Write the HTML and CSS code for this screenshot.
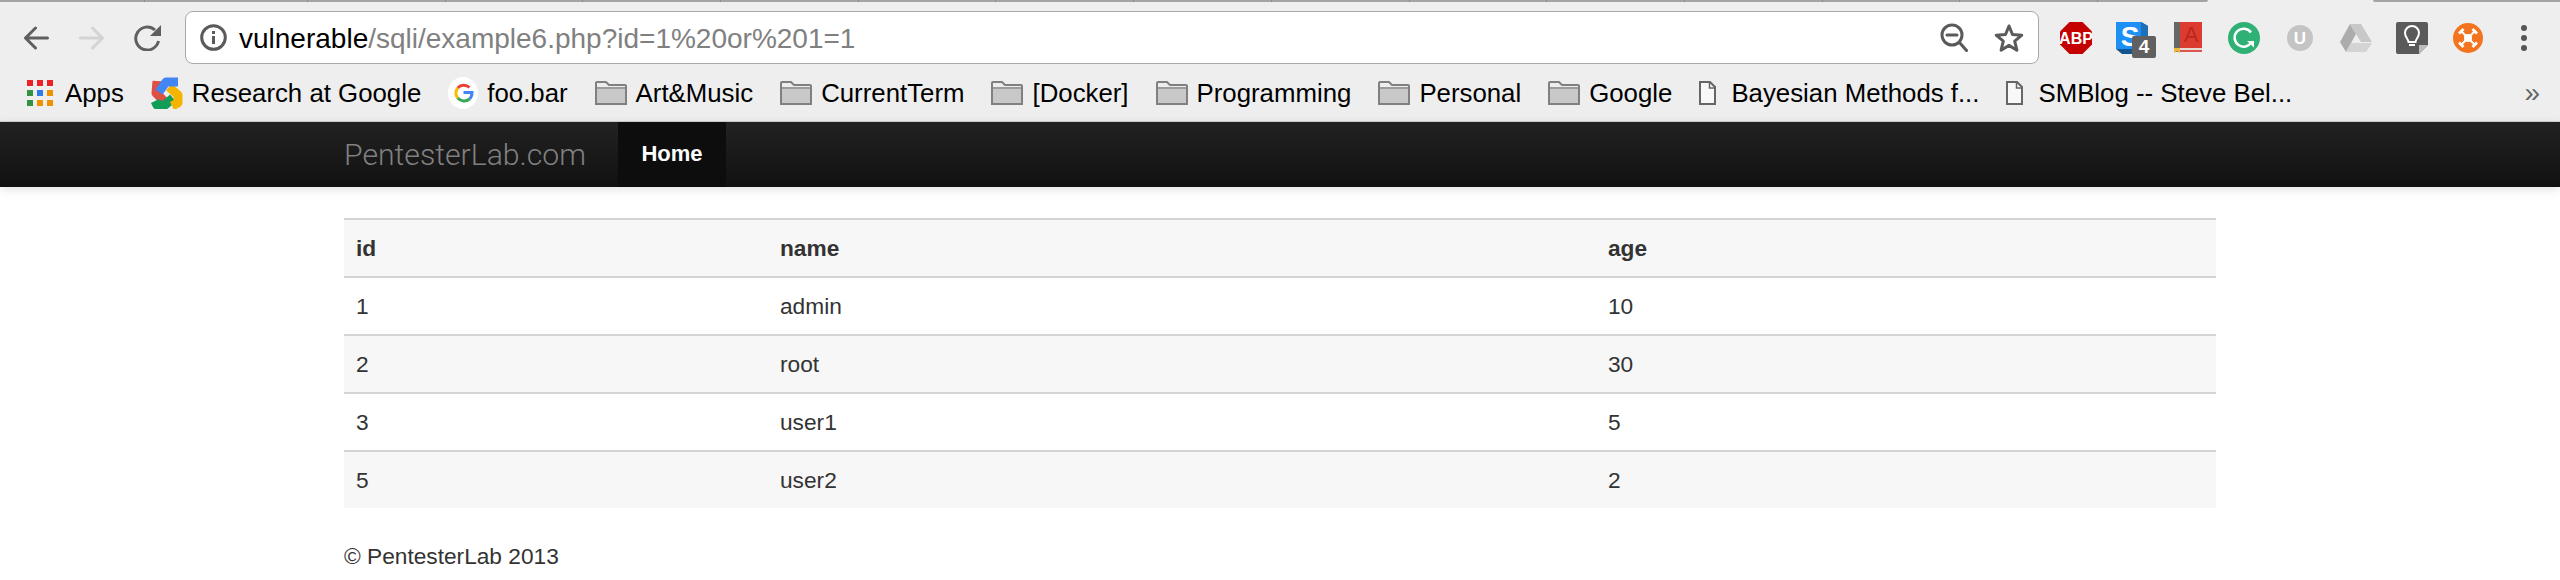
FILE: index.html
```html
<!DOCTYPE html>
<html lang="en">
<head>
    <meta charset="UTF-8">
    <title>PentesterLab.com</title>
    <link rel="stylesheet" href="styles.css">
</head>
<body>
    <div class="chrome">
        <div class="tabs">
            <span class="tab tab-first"></span><span class="tab tab-second"></span>
            <span class="tab"></span><span class="tab"></span><span class="tab"></span><span class="tab"></span><span class="tab"></span><span class="tab"></span><span class="tab"></span><span class="tab"></span><span class="tab"></span><span class="tab"></span><span class="tab"></span><span class="tab"></span><span class="tab"></span>
            <span class="tab tab-short"></span>
            <span class="tab-active"></span>
            <span class="tab tab-last"></span>
        </div>

        <div class="toolbar">
            <div class="tool-btn">
                <svg width="26" height="24" viewBox="0 0 26 24" fill="none" stroke="#5f5f5f" stroke-width="3" stroke-linecap="round" stroke-linejoin="round"><path d="M24.500 12H2.500M12.500 2 2.500 12l10 10"/></svg>
            </div>
            <div class="tool-btn">
                <svg width="26" height="24" viewBox="0 0 26 24" fill="none" stroke="#d3d3d3" stroke-width="3" stroke-linecap="round" stroke-linejoin="round"><path d="M1.500 12h22M13.500 2l10 10-10 10"/></svg>
            </div>
            <div class="tool-btn">
                <svg width="28" height="26" viewBox="0 0 28 26" fill="none"><path d="M24.500 16A11.500 11.500 0 1 1 21 5" stroke="#5f5f5f" stroke-width="3"/><path d="M27 0v11H16z" fill="#5f5f5f"/></svg>
            </div>

            <div class="address">
                <svg class="info-icon" width="27" height="27" viewBox="0 0 27 27" fill="none" stroke="#5a5a5a"><circle cx="13.500" cy="13.500" r="11.800" stroke-width="3"/><path d="M13.500 12v8" stroke-width="3"/><path d="M13.500 7v3" stroke-width="3"/></svg>
                <div class="url"><span class="url-host">vulnerable</span>/sqli/example6.php?id=1%20or%201=1</div>
                <svg class="zoom-icon" width="28" height="29" viewBox="0 0 28 29" fill="none" stroke="#5a5a5a" stroke-width="3"><circle cx="12" cy="12" r="10"/><path d="M7 12h10M19.500 19.500l7 8" stroke-linecap="round"/></svg>
                <svg class="star-icon" width="30" height="30" viewBox="0 0 30 30" fill="none" stroke="#5a5a5a" stroke-width="3" stroke-linejoin="round"><path d="M15 3l3.500 8.500 9.300.7-7.100 6 2.200 9L15 22.400 7.100 27.200l2.200-9-7.100-6 9.300-.7z"/></svg>
            </div>

            <div class="tool-btn">
                <svg width="32" height="32" viewBox="0 0 32 32"><path d="M9.500 0h13L32 9.500v13L22.500 32h-13L0 22.500v-13z" fill="#c40000"/><text x="16" y="21.500" class="abp-text">ABP</text></svg>
            </div>
            <div class="tool-btn">
                <svg width="32" height="32" viewBox="0 0 32 32"><path d="M0 0h25l7 4v23l-6 5H6l-6-5z" fill="#15558f"/><path d="M25 0l7 4v23l-7 0z" fill="#1d6fb8"/><path d="M0 0h25v27H0z" fill="#1e90f5"/><text x="14" y="24" class="s-text">S</text></svg>
                <span class="ext-badge">4</span>
            </div>
            <div class="tool-btn">
                <svg width="28" height="32" viewBox="0 0 28 32"><path d="M0 0h6v30H0z" fill="#666"/><path d="M6 0h22v26H6z" fill="#dd3b2f"/><path d="M6 26h22v2H6z" fill="#e9d9d4"/><path d="M6 28h22v2H6z" fill="#d9574c"/><path d="M0 26h6v5l-3-2-3 2z" fill="#eeb93a"/><text x="17" y="20" class="book-text">A</text></svg>
            </div>
            <div class="tool-btn">
                <svg width="32" height="32" viewBox="0 0 32 32"><circle cx="16" cy="16" r="16" fill="#2fb074"/><path d="M23.500 20A9 9 0 1 1 23 10.500" fill="none" stroke="#fff" stroke-width="2.500"/><path d="M19 19h7v6.500z" fill="#fff"/></svg>
            </div>
            <div class="tool-btn">
                <svg width="26" height="26" viewBox="0 0 26 26"><circle cx="13" cy="13" r="13" fill="#c4c4c4"/><text x="13" y="19" class="u-text">U</text></svg>
            </div>
            <div class="tool-btn">
                <svg width="32" height="28" viewBox="0 0 32 28"><path d="M10 0l6 10L6 28 0 18z" fill="#acacac"/><path d="M10 0h11l11 18H21l-5-8z" fill="#c8c8c8"/><path d="M11 19h21l-6 9H6z" fill="#d4d4d4"/></svg>
            </div>
            <div class="tool-btn">
                <svg width="32" height="32" viewBox="0 0 32 32"><path d="M2 0h28q2 0 2 2v21l-9 9H2q-2 0-2-2V2q0-2 2-2z" fill="#5a5a5a"/><path d="M32 23h-9v9z" fill="#bcbcbc"/><path d="M12.500 20c0-3-3.500-4.500-3.500-9a7 7 0 0 1 14 0c0 4.500-3.500 6-3.500 9z" fill="none" stroke="#fff" stroke-width="2"/><path d="M13 23h6" stroke="#fff" stroke-width="2"/></svg>
            </div>
            <div class="tool-btn">
                <svg width="30" height="30" viewBox="0 0 30 30"><circle cx="15" cy="15" r="15" fill="#f4731f"/><path d="M8 8l14 14M22 8L8 22" stroke="#fff" stroke-width="2"/><circle cx="15" cy="15" r="4" fill="#fff"/><path d="M5 9.500l4.500-4.500 2 2L7 11.500zM18.500 7l2-2 4.500 4.500-2 2zM5 20.500l2-2 4.500 4.500-2 2zM18.500 23l4.500-4.500 2 2L20.500 25z" fill="#fff"/></svg>
            </div>
            <div class="tool-btn">
                <svg width="6" height="26" viewBox="0 0 6 26" fill="#555"><circle cx="3" cy="3" r="3"/><circle cx="3" cy="13" r="3"/><circle cx="3" cy="23" r="3"/></svg>
            </div>
        </div>

        <div class="bookmarks">
            <a class="bookmark bookmark-apps">
                <svg width="26" height="26" viewBox="0 0 26 26"><path d="M0 0h6v6H0zM10 0h6v6h-6zM20 0h6v6h-6z" fill="#ee2027"/><path d="M0 10h6v6H0zM0 20h6v6H0z" fill="#34913f"/><path d="M10 10h6v6h-6z" fill="#2f7bee"/><path d="M20 10h6v6h-6zM10 20h6v6h-6zM20 20h6v6h-6z" fill="#ee9200"/></svg>
                Apps
            </a>
            <a class="bookmark">
                <svg width="32" height="32" viewBox="0 0 32 32" fill="none" stroke-width="9" stroke-linejoin="round"><path d="M6 4 5 16l9 9" stroke="#dd5044"/><path d="M22 21l-8 7H6l-2-4" stroke="#0f9d58"/><path d="M18 10l9 8v8l-6 3" stroke="#f4b400"/><path d="M8 15l7-10h12" stroke="#4285f4"/></svg>
                Research at Google
            </a>
            <a class="bookmark">
                <svg width="30" height="32" viewBox="0 0 30 32"><path d="M0 16a15 16 0 0 1 30 0 15 16 0 0 1-30 0z" fill="#fff"/><path d="M21.500 10.500A8.500 8.500 0 0 0 9.700 11" fill="none" stroke="#ea4335" stroke-width="3"/><path d="M9.700 11a8.500 8.500 0 0 0 0 10" fill="none" stroke="#fbbc05" stroke-width="3"/><path d="M9.700 21a8.500 8.500 0 0 0 11.800 1" fill="none" stroke="#34a853" stroke-width="3"/><path d="M21.500 22q2.500-2.500 2.500-6.500h-8.500" fill="none" stroke="#4285f4" stroke-width="3"/></svg>
                foo.bar
            </a>
            <a class="bookmark"><svg width="32" height="24" viewBox="0 0 32 24"><use href="#folder"/></svg>Art&amp;Music</a>
            <a class="bookmark"><svg width="32" height="24" viewBox="0 0 32 24"><use href="#folder"/></svg>CurrentTerm</a>
            <a class="bookmark"><svg width="32" height="24" viewBox="0 0 32 24"><use href="#folder"/></svg>[Docker]</a>
            <a class="bookmark"><svg width="32" height="24" viewBox="0 0 32 24"><use href="#folder"/></svg>Programming</a>
            <a class="bookmark"><svg width="32" height="24" viewBox="0 0 32 24"><use href="#folder"/></svg>Personal</a>
            <a class="bookmark"><svg width="32" height="24" viewBox="0 0 32 24"><use href="#folder"/></svg>Google</a>
            <a class="bookmark bookmark-file"><svg width="17" height="24" viewBox="0 0 17 24"><use href="#file"/></svg>Bayesian Methods f...</a>
            <a class="bookmark bookmark-file"><svg width="17" height="24" viewBox="0 0 17 24"><use href="#file"/></svg>SMBlog -- Steve Bel...</a>
            <span class="more">»</span>
        </div>
    </div>

    <div class="navbar">
        <div class="container nav-inner">
            <a class="brand">PentesterLab.com</a>
            <a class="nav-active">Home</a>
        </div>
    </div>

    <div class="container">
        <table class="results">
            <thead>
                <tr><th class="col-id">id</th><th class="col-name">name</th><th>age</th></tr>
            </thead>
            <tbody>
                <tr><td>1</td><td>admin</td><td>10</td></tr>
                <tr><td>2</td><td>root</td><td>30</td></tr>
                <tr><td>3</td><td>user1</td><td>5</td></tr>
                <tr><td>5</td><td>user2</td><td>2</td></tr>
            </tbody>
        </table>
        <footer>© PentesterLab 2013</footer>
    </div>

    <svg class="defs" width="0" height="0">
        <symbol id="folder" viewBox="0 0 32 24">
            <path d="M1 23V2q0-1 1-1h9l3 3h16q1 0 1 1v18z" fill="#ededed" stroke="#808080" stroke-width="2"/>
            <path d="M2 8h28v14H2z" fill="#c8c8c8"/>
            <path d="M2 7h28" stroke="#808080" stroke-width="1.500"/>
        </symbol>
        <symbol id="file" viewBox="0 0 17 24">
            <path d="M1 1h10l5 5v17H1z" fill="#f8f8f8" stroke="#666" stroke-width="2"/>
            <path d="M10.500 1v6H16" fill="none" stroke="#666" stroke-width="1.500"/>
        </symbol>
    </svg>
</body>
</html>
```

FILE: styles.css
```css
* {
    box-sizing: border-box;
}

body {
    margin: 0;
    background: #fff;
    color: #333;
    font-family: "Liberation Sans", Arial, sans-serif;
    overflow: hidden;
}

.defs {
    position: absolute;
}

.container {
    width: 1872px;
    margin: 0 auto;
}

/* browser chrome */
.chrome {
    height: 122px;
    background: #eeeeee;
    border-bottom: 1px solid #d2d2d2;
}

.tabs {
    display: flex;
    height: 11px;
    align-items: flex-start;
}

.tab {
    width: 137.700px;
    height: 2px;
    background: #a4a4a4;
    border-right: 1px solid #8c8c8c;
}

.tab-first {
    width: 145px;
}

.tab-second {
    width: 163px;
}

.tab-short {
    width: 110px;
    border-right: 0;
    border-bottom-right-radius: 3px;
}

.tab-active {
    width: 165px;
}

.tab-last {
    flex: 1;
    border-right: 0;
    border-bottom-left-radius: 3px;
}

.toolbar {
    display: flex;
    align-items: center;
    height: 53px;
    padding: 0 8px;
}

.tool-btn {
    position: relative;
    display: flex;
    justify-content: center;
    align-items: center;
    flex: 0 0 56px;
}

.address {
    flex: 1;
    display: flex;
    align-items: center;
    height: 53px;
    margin: 0 9px;
    padding: 0 14px;
    background: #fff;
    border: 1.500px solid #a9a9a9;
    border-radius: 8px;
}

.url {
    flex: 1;
    margin-left: 12px;
    padding-top: 2px;
    color: #808080;
    font-size: 28px;
}

.url-host {
    color: #000;
}

.star-icon {
    margin-left: 26px;
}

.abp-text {
    fill: #fff;
    font-size: 16px;
    font-weight: bold;
    text-anchor: middle;
}

.s-text {
    fill: #fff;
    font-size: 28px;
    font-weight: bold;
    text-anchor: middle;
}

.book-text {
    fill: #b9281f;
    font-size: 22px;
    text-anchor: middle;
}

.u-text {
    fill: #fff;
    font-size: 17px;
    font-weight: bold;
    text-anchor: middle;
}

.ext-badge {
    position: absolute;
    left: 28px;
    top: 14px;
    width: 24px;
    height: 22px;
    background: #606060;
    border-radius: 2px;
    color: #fff;
    font-size: 19px;
    font-weight: bold;
    line-height: 22px;
    text-align: center;
}

.bookmarks {
    display: flex;
    align-items: center;
    gap: 27px;
    height: 57px;
    padding: 1px 20px 0 27px;
    color: #000;
    font-size: 25.800px;
    white-space: nowrap;
}

.bookmark {
    display: flex;
    align-items: center;
    gap: 9px;
}

.bookmark-apps {
    gap: 12px;
}

.bookmark-file {
    gap: 15px;
}

.more {
    margin-left: auto;
    color: #666;
    font-size: 28px;
}

/* site */
.navbar {
    height: 65px;
    background: linear-gradient(#222222, #111111);
    box-shadow: 0 2px 10px rgba(0, 0, 0, 0.12);
}

.nav-inner {
    display: flex;
    height: 100%;
}

.brand {
    width: 274px;
    color: #808080;
    font-family: Roboto, "Liberation Sans", sans-serif;
    font-size: 30.200px;
    font-weight: 300;
    line-height: 66px;
}

.nav-active {
    width: 108px;
    height: 100%;
    background: #0d0d0d;
    color: #fff;
    font-size: 22px;
    font-weight: bold;
    line-height: 64px;
    text-align: center;
}

.results {
    width: 100%;
    margin-top: 31px;
    border-collapse: separate;
    border-spacing: 0;
    font-size: 22.700px;
    table-layout: fixed;
}

.col-id {
    width: 424px;
}

.col-name {
    width: 828px;
}

.results th,
.results td {
    height: 58px;
    padding: 0 12px;
    border-top: 2px solid #d4d4d4;
    text-align: left;
}

.results thead tr,
.results tbody tr:nth-child(even) {
    background: #f7f7f7;
}

footer {
    margin-top: 31px;
    color: #333;
    font-size: 22.700px;
    line-height: 34px;
}
```
